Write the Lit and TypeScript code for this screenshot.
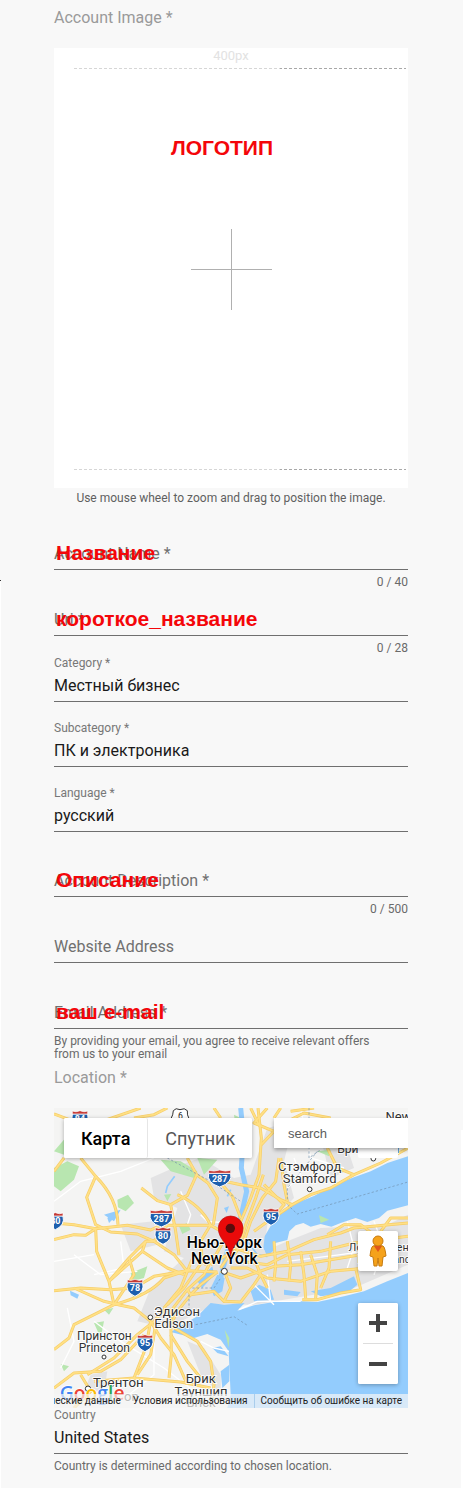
import { LitElement, html, svg, css, nothing } from "lit";
import { customElement, property } from "lit/decorators.js";

const fieldStyles = css`
  :host {
    display: block;
    font-family: Roboto, sans-serif;
    color: #1a1a1a;
  }
  * {
    box-sizing: border-box;
  }
  .field {
    display: grid;
    grid-template-rows: 14px 28px auto auto;
  }
  .small {
    font-size: 12px;
    line-height: 14px;
    color: #777;
  }
  .control {
    display: grid;
    align-items: center;
    padding-top: 4px;
  }
  .control > * {
    grid-area: 1 / 1;
  }
  .box {
    width: 100%;
    height: 24px;
    margin: 0;
    padding: 0;
    border: 0;
    border-radius: 0;
    outline: 0;
    background: transparent;
    appearance: none;
    font: 16px/24px Roboto, sans-serif;
    color: #1a1a1a;
    opacity: 1;
  }
  .rest {
    font-size: 16px;
    line-height: 24px;
    color: #707070;
    pointer-events: none;
  }
  .note {
    padding: 0 0 2px 2px;
    font: bold 21px/22px "Liberation Sans", Arial, sans-serif;
    color: #f4060a;
    pointer-events: none;
  }
  .line {
    margin-top: 3px;
    border-top: 1px solid #6f6f6f;
  }
  .under {
    display: flex;
    min-height: 20px;
    padding-top: 6px;
    font-size: 12px;
    line-height: 13px;
    color: #6a6a6a;
  }
  .hint {
    flex: 1;
    margin: 0;
    padding-right: 32px;
  }
  .count {
    margin-left: auto;
  }
`;

@customElement("text-field")
export class TextField extends LitElement {
  static styles = fieldStyles;
  @property() label = "";
  @property() note = "";
  @property() hint = "";
  @property() value = "";
  @property({ type: Number }) max = 0;

  render() {
    return html`<div class="field">
      <span class="small">${this.value ? html`<label for="box">${this.label}</label>` : nothing}</span>
      <div class="control">
        ${this.value ? nothing : html`<label class="rest" for="box">${this.label}</label>`}
        <input class="box" id="box" type="text" .value=${this.value} />
        ${this.note ? html`<span class="note">${this.note}</span>` : nothing}
      </div>
      <div class="line"></div>
      <div class="under">
        ${this.hint ? html`<p class="hint">${this.hint}</p>` : nothing}
        ${this.max ? html`<span class="count">0 / ${this.max}</span>` : nothing}
      </div>
    </div>`;
  }
}

@customElement("select-field")
export class SelectField extends LitElement {
  static styles = [
    fieldStyles,
    css`
      .under {
        min-height: 19px;
      }
    `,
  ];
  @property() label = "";
  @property() value = "";

  render() {
    return html`<div class="field">
      <label class="small" for="box">${this.label}</label>
      <div class="control">
        <select class="box" id="box">
          <option selected>${this.value}</option>
        </select>
      </div>
      <div class="line"></div>
      <div class="under"></div>
    </div>`;
  }
}

const roads = [
  "M0 18L60 40L130 45L260 0",
  "M0 190L30 150M80 150L125 205L98 268L125 350L170 372L250 378L300 400L340 352L470 352L520 380",
  "M125 205Q190 270 192 350",
  "M0 345L60 350L125 362L220 352L290 366L320 352",
  "M0 395L60 380L95 382L125 362L128 430L165 520L180 590L60 650L45 690L0 725",
  "M0 548L80 540L170 545L240 540L300 505L400 488L490 492",
  "M60 540L150 580L200 592L240 600L290 640L320 690L360 740L400 830",
  "M180 590Q290 560 330 510L410 484",
  "M165 520L225 450L275 400L300 400M275 400L265 430L165 520",
  "M265 430L340 480L390 500",
  "M300 400L360 440L400 490",
  "M262 240L310 278L350 290L400 262L428 200L400 150M350 290L365 370L375 440",
  "M428 200L462 225L490 270L478 350M370 260Q440 290 470 352",
  "M490 215L560 230L620 240L680 275L715 290",
  "M500 225L535 265L560 330",
  "M612 0L622 90L615 200L590 270L560 340L540 420L500 480",
  "M628 200L605 270L575 350L555 420",
  "M640 0L600 45L660 70L622 110",
  "M675 150L665 220L625 270L590 340L570 400L540 440",
  "M590 0L614 50M660 30L680 0",
  "M710 10L780 0M700 40L750 15L830 30",
  "M680 150L690 230L700 280",
  "M630 230L690 290L655 330L600 370",
  "M1062 120L980 165L900 200L830 240L770 260L715 290L650 335",
  "M820 120L850 180L900 200",
  "M540 420L620 445L700 430L780 395L860 375L900 360L1062 345",
  "M560 460L640 470L700 440L800 430L900 405L1062 385",
  "M500 490L560 510L660 475L740 470L830 455L920 440",
  "M530 480L580 480L640 510L740 520L830 490L940 480",
  "M600 450L620 500L640 540M660 400L665 470L660 520",
  "M740 430L750 500L755 570M770 440L790 500L785 572",
  "M830 400L825 480L800 540M700 400L710 470L705 520",
  "M905 480L920 545L860 555L790 575L745 575",
  "M820 380L870 350L920 350L960 380M980 370L1010 330L1062 330",
  "M515 500L530 540L510 580L480 550L410 560L400 545",
  "M510 580L560 582L600 530L620 500",
  "M490 492L440 530L410 560L370 610L350 650",
  "M480 440L450 500L400 545L350 610M420 440L380 540L330 600",
  "M470 350L440 400L445 460L390 540L340 590",
  "M520 380L480 450L450 470M560 400L520 440L470 470",
  "M350 600L352 740L345 810M335 600L300 640L250 680L180 750L100 800",
  "M290 640L275 720L240 810M305 650L290 740L250 800",
  "M0 840L60 795L140 790L200 755L270 680",
  "M80 800L110 850L60 900M120 820L240 810L380 822L470 840",
  "M360 660L430 700L470 760L480 830L470 900M350 680L400 760L440 810",
  "M340 0L300 20L240 30M480 0L500 30",
  "M225 450L240 500L180 590",
];

const streets = [
  "M0 280L80 220L200 190L300 150M200 400L210 480L120 500",
  "M40 600L60 700L20 780M120 640L200 700L330 780L420 850",
  "M60 440L140 500L250 490M720 150L740 200L700 240",
  "M440 320L460 340L520 345L560 370M600 530L660 590M640 500L650 580",
  "M555 605L610 580L740 580M440 700L480 720L525 730",
  "M700 460L860 440L1000 420M880 340L900 420L880 480M960 340L990 420L960 500",
  "M300 700L300 800L200 880M740 0L770 150L870 180",
  "M0 460L120 440M380 250L410 320L400 350",
];

const interstates = [
  { x: 78, y: 32, n: "84" },
  { x: 497, y: 210, n: "287" },
  { x: 322, y: 330, n: "287" },
  { x: 327, y: 382, n: "80" },
  { x: 4, y: 338, n: "80" },
  { x: 651, y: 325, n: "95" },
  { x: 243, y: 538, n: "78" },
  { x: 273, y: 704, n: "95" },
];

const places = [
  { x: 767, y: 188, t: "Стэмфорд", s: 39 },
  { x: 767, y: 226, t: "Stamford", s: 39 },
  { x: 369, y: 623, t: "Эдисон", s: 39 },
  { x: 359, y: 661, t: "Edison", s: 39 },
  { x: 151, y: 696, t: "Принстон", s: 36 },
  { x: 151, y: 732, t: "Princeton", s: 36 },
  { x: 193, y: 836, t: "Трентон", s: 40 },
  { x: 232, y: 878, t: "on", s: 39 },
  { x: 440, y: 826, t: "Брик", s: 39 },
  { x: 441, y: 864, t: "Тауншип", s: 39 },
  { x: 441, y: 898, t: "Brick", s: 39 },
  { x: 1052, y: 38, t: "New H", s: 39 },
  { x: 945, y: 134, t: "Бриджпорт", s: 36 },
  { x: 984, y: 430, t: "Лонг-Айленд", s: 33 },
  { x: 990, y: 464, t: "Long Island", s: 31 },
];

const shield = (x: number, y: number, n: string) => {
  const w = n.length > 2 ? 35 : 25;
  return svg`<g transform="translate(${x} ${y})">
    <path class="shield" d="M${-w + 2} -14H${w - 2}Q${w + 5} 14 0 27Q${-w - 5} 14 ${-w + 2} -14Z" />
    <path class="crown" d="M${-w + 2} -14V-23Q${-w / 2} -18 0 -24Q${w / 2} -18 ${w - 2} -23V-14Z" />
    <text class="num" y="11">${n}</text>
  </g>`;
};

@customElement("location-map")
export class LocationMap extends LitElement {
  static styles = css`
    :host {
      display: block;
      font-family: Roboto, sans-serif;
    }
    * {
      box-sizing: border-box;
    }
    .map {
      position: relative;
      height: 300px;
      overflow: hidden;
      background: #93ccfd;
    }
    .canvas {
      display: block;
      width: 100%;
      height: 100%;
    }
    .land { fill: #f4f4f3; }
    .urban { fill: #e3e3e4; }
    .water { fill: #93ccfd; }
    .river { fill: none; stroke: #93ccfd; }
    .green { fill: #b8e6b0; }
    .street { fill: none; stroke: #fff; stroke-width: 4; }
    .casing { fill: none; stroke: #f6cd68; stroke-width: 9; stroke-linejoin: round; }
    .road { fill: none; stroke: #ffe085; stroke-width: 5; stroke-linejoin: round; }
    .border { fill: none; stroke: #7191ad; stroke-width: 2; stroke-dasharray: 7 6; }
    .shield { fill: #1d5fae; stroke: #fff; stroke-width: 3; }
    .crown { fill: #c53a35; stroke: #fff; stroke-width: 2; }
    .num { fill: #fff; font-size: 27px; font-weight: 700; text-anchor: middle; }
    .us { fill: #fff; stroke: #333; stroke-width: 3; }
    .us-num { fill: #222; font-size: 26px; text-anchor: middle; }
    .place { fill: #333; stroke: #fff; stroke-width: 5; paint-order: stroke; text-anchor: middle; }
    .city { fill: #000; stroke: #fff; stroke-width: 5; paint-order: stroke; text-anchor: middle; font-size: 47px; font-weight: 500; }
    .dot { fill: #fff; stroke: #333; stroke-width: 3; }
    .pin { fill: #ea0a0a; stroke: #b80d0d; stroke-width: 2; }
    .hole { fill: #5a0b0b; }
    .logo { font: 600 58px "Open Sans", sans-serif; stroke: #fff; stroke-width: 4; paint-order: stroke; }
    .blue { fill: #4285f4; }
    .red { fill: #ea4335; }
    .yellow { fill: #fbbc05; }
    .lime { fill: #34a853; }
    button {
      margin: 0;
      padding: 0;
      border: 0;
      background: #fff;
      font-family: inherit;
    }
    .types {
      position: absolute;
      top: 10px;
      left: 10px;
      display: flex;
      height: 40px;
      background: #fff;
      border-radius: 2px;
      box-shadow: 0 1px 4px rgba(0, 0, 0, 0.3);
    }
    .type {
      padding: 0 17px;
      border-radius: 2px;
      font-size: 18px;
      color: #565656;
    }
    .type.on {
      border-right: 1px solid #e6e6e6;
      font-weight: 500;
      color: #000;
    }
    .full {
      position: absolute;
      top: 10px;
      right: 10px;
      width: 40px;
      height: 40px;
      border-radius: 2px;
    }
    .search {
      position: absolute;
      top: 10px;
      left: 220px;
      right: 0;
      height: 30px;
      background: #fff;
      box-shadow: 0 2px 4px rgba(0, 0, 0, 0.35);
    }
    .query {
      width: 100%;
      height: 30px;
      padding: 0 14px;
      border: 0;
      outline: 0;
      background: transparent;
      font: 13px "Liberation Sans", Arial, sans-serif;
    }
    .query::placeholder {
      color: #5c5c5c;
      opacity: 1;
    }
    .side {
      position: absolute;
      right: 10px;
      bottom: 24px;
      display: flex;
      flex-direction: column;
      gap: 32px;
      width: 40px;
    }
    .man,
    .zoom {
      border-radius: 2px;
      background: #fff;
      box-shadow: 0 1px 4px rgba(0, 0, 0, 0.3);
    }
    .man {
      display: grid;
      place-items: center;
      height: 40px;
    }
    .zoom {
      display: flex;
      flex-direction: column;
      align-items: center;
    }
    .step {
      display: grid;
      place-items: center;
      width: 40px;
      height: 40px;
      border-radius: 2px;
    }
    .rule {
      width: 30px;
      height: 1px;
      background: #ddd;
    }
    .legal {
      position: absolute;
      right: 0;
      bottom: 0;
      display: flex;
      height: 14px;
      white-space: nowrap;
      font-size: 10px;
      line-height: 14px;
      background: rgba(245, 245, 245, 0.7);
    }
    .legal a {
      padding: 0 6px;
      color: #222;
      text-decoration: none;
    }
    .legal .last {
      border-left: 1px solid #a9cdec;
    }
  `;

  render() {
    return html`<div class="map">
      <svg class="canvas" viewBox="0 0 1062 900" preserveAspectRatio="xMidYMid slice" role="img" aria-label="New York">
        <rect class="land" width="1062" height="900" />
        <path class="urban" d="M380 170L440 150L540 210L590 200L640 60L720 40L690 160L720 270L640 350L630 430L700 400L800 360L1000 350L1062 320V470L900 540L600 590L480 590L340 660L250 640L290 540L390 450L330 430L370 300L300 270L290 210Z" />
        <path class="urban" d="M200 350L300 340L310 410L230 430ZM110 800L160 790L150 850L90 850ZM400 700L450 720L500 800L500 860L440 800ZM790 50L860 60L900 180L830 210Z" />
        <path class="green" d="M0 180L40 160L75 175L60 215L20 250L0 235ZM320 155L380 160L430 190L420 210L350 190ZM190 275L222 260L240 285L215 310L192 298ZM120 645L150 640L140 690ZM20 768L45 775L30 790ZM330 260L352 258L340 280ZM395 60L450 50L460 100L400 110ZM0 130L60 60L90 80L30 140ZM430 150L490 155L450 200ZM230 495L280 475L270 510L235 520ZM375 355L400 345L410 365L385 378ZM230 545L265 555L240 575ZM150 605L178 600L165 620ZM790 130L830 125L825 145ZM540 20L560 30L545 60Z" />
        <path class="water" d="M1062 145L1000 165L950 190L900 208L840 232L780 264L720 288L672 322L652 350L632 385L628 420L640 445L658 428L664 405L700 396L706 370L725 352L748 345L770 356L800 348L832 356L860 345L905 330L940 342L975 330L1000 308L1062 292Z" />
        <path class="water" d="M1062 495L1000 520L930 550L870 565L790 582L740 580L660 582L600 592L550 608L572 585L510 590L470 585L430 625L350 672L420 690L460 678L500 695L524 730L530 860L520 900H1062Z" />
        <path class="water" d="M590 550L615 530L650 545L660 575L600 580ZM770 550L830 540L900 505L910 530L880 555L800 565ZM490 500L512 510L505 550L480 565L470 540ZM430 520L475 475L480 500L445 540ZM160 330L185 310L180 330L165 345ZM150 320L200 305L180 340ZM48 548L75 560L70 572L50 562ZM690 545L740 552L730 565L690 560ZM510 300L525 295L518 315ZM475 720L500 715L524 745L490 735ZM500 790L526 770V820L505 840Z" />
        <path class="river" stroke-width="15" d="M560 0L568 80L562 180L578 250L560 330L520 430L500 510" />
        <path class="river" stroke-width="5" d="M362 205L340 235L335 255M530 245L520 265M700 60L675 80M640 445L610 440L580 400M400 610L440 625L470 610" />
        <path class="green" d="M795 322L825 335L800 345ZM512 665L526 690L524 720Z" />
        ${streets.map((d) => svg`<path class="street" d=${d} />`)}
        ${roads.map((d) => svg`<path class="casing" d=${d} />`)}
        ${roads.map((d) => svg`<path class="road" d=${d} />`)}
        <path class="border" d="M340 150L470 220L560 280M415 540H480L500 510M405 560V610M425 650L540 626L580 652M700 290L730 318L1062 222M765 0V150L800 125M790 130L700 240V280" />
        <path class="us" d="M358 8Q365 -2 378 5Q392 -2 400 8Q398 20 406 34H350Q358 20 358 8Z" />
        <text class="us-num" x="379" y="32">6</text>
        ${interstates.map((s) => shield(s.x, s.y, s.n))}
        ${places.map((p) => svg`<text class="place" x=${p.x} y=${p.y} font-size=${p.s}>${p.t}</text>`)}
        <circle class="dot" cx="767" cy="244" r="7" />
        <circle class="dot" cx="289" cy="628" r="7" />
        <circle class="dot" cx="150" cy="747" r="6" />
        <circle class="dot" cx="102" cy="842" r="8" />
        <circle class="dot" cx="958" cy="152" r="7" />
        <text class="city" x="511" y="421">Нью-Йорк</text>
        <text class="city" x="511" y="469">New York</text>
        <circle class="dot" cx="511" cy="490" r="9" />
        <path class="pin" d="M530 445C525 405 493 397 493 360A37 36 0 0 1 567 360C567 397 535 405 530 445Z" />
        <circle class="hole" cx="529" cy="361" r="14" />
        <text class="logo" x="17" y="876"><tspan class="blue">G</tspan><tspan class="red">o</tspan><tspan class="yellow">o</tspan><tspan class="blue">g</tspan><tspan class="lime">l</tspan><tspan class="red">e</tspan></text>
      </svg>
      <div class="types">
        <button class="type on">Карта</button>
        <button class="type">Спутник</button>
      </div>
      <button class="full" aria-label="Fullscreen"></button>
      <div class="search">
        <input class="query" type="text" placeholder="search" aria-label="search" />
      </div>
      <div class="side">
        <button class="man" aria-label="Street View">
          <svg width="18" height="32" viewBox="0 0 18 32">
            <path fill="#f5a21b" stroke="#c77b10" d="M4 11Q9 9 14 11Q16 12 17 21L14 22L13 31H10L9 23L8 31H5L4 22L1 21Q2 12 4 11Z" />
            <circle cx="9" cy="6" r="5" fill="#f5a21b" stroke="#c77b10" />
            <path fill="#e0561b" d="M5 11H13L9 17Z" />
          </svg>
        </button>
        <div class="zoom">
          <button class="step" aria-label="Zoom in">
            <svg width="18" height="18" viewBox="0 0 18 18"><path fill="#444" d="M7 0H11V7H18V11H11V18H7V11H0V7H7Z" /></svg>
          </button>
          <div class="rule"></div>
          <button class="step" aria-label="Zoom out">
            <svg width="18" height="18" viewBox="0 0 18 18"><path fill="#444" d="M0 7H18V11H0Z" /></svg>
          </button>
        </div>
      </div>
      <div class="legal">
        <a href="#data">Картографические данные</a>
        <a href="#terms">Условия использования</a>
        <a class="last" href="#report">Сообщить об ошибке на карте</a>
      </div>
    </div>`;
  }
}

@customElement("app-root")
export class AppRoot extends LitElement {
  static styles = css`
    :host {
      display: block;
      font-family: Roboto, sans-serif;
    }
    * {
      box-sizing: border-box;
    }
    .page {
      position: relative;
      padding: 8px 55px 14px 54px;
      background: #f8f8f8;
    }
    .edge-left,
    .edge-right {
      position: absolute;
      bottom: 0;
      background: #fff;
    }
    .edge-left {
      left: 0;
      top: 580px;
      width: 1px;
      border-top: 1px solid #333;
    }
    .edge-right {
      right: 0;
      top: 1130px;
      width: 2px;
    }
    .title {
      margin: 0;
      font-size: 16px;
      font-weight: 400;
      line-height: 20px;
      color: #9a9a9a;
    }
    .upload {
      position: relative;
      display: flex;
      flex-direction: column;
      width: 100%;
      height: 440px;
      margin: 20px 0 0;
      padding: 0 0 18px;
      border: 0;
      background: #fff;
      font-family: inherit;
    }
    .size {
      font-size: 13px;
      line-height: 16px;
      height: 20px;
      color: #e2e2e2;
    }
    .dash {
      height: 1px;
      margin: 0 2px 0 20px;
      background:
        repeating-linear-gradient(90deg, transparent 0 3px, #fff 3px 5px),
        linear-gradient(90deg, #d6d6d6 62%, #a8a8a8 62%);
    }
    .area {
      flex: 1;
      display: grid;
      place-items: center;
    }
    .logo-note {
      position: absolute;
      top: 88px;
      left: 0;
      right: 0;
      padding-right: 18px;
      text-align: center;
      font: bold 21px/24px "Liberation Sans", Arial, sans-serif;
      color: #f4060a;
    }
    .tip {
      margin: 0 0 16px;
      text-align: center;
      font-size: 12px;
      line-height: 20px;
      color: #5f5f5f;
    }
    .location {
      margin: 7px 0 20px;
    }
  `;

  render() {
    return html`<main class="page">
      <div class="edge-left"></div>
      <div class="edge-right"></div>
      <h2 class="title">Account Image *</h2>
      <button class="upload" aria-label="Account Image">
        <span class="size">400px</span>
        <span class="dash"></span>
        <span class="area">
          <svg width="81" height="81" viewBox="0 0 81 81"><path fill="#b0b0b0" d="M40 0H41V40H81V41H41V81H40V41H0V40H40Z" /></svg>
        </span>
        <span class="dash"></span>
        <span class="logo-note">ЛОГОТИП</span>
      </button>
      <p class="tip">Use mouse wheel to zoom and drag to position the image.</p>
      <text-field label="Account Name *" note="Название" max="40"></text-field>
      <text-field label="Uri *" note="короткое_название" max="28"></text-field>
      <select-field label="Category *" value="Местный бизнес"></select-field>
      <select-field label="Subcategory *" value="ПК и электроника"></select-field>
      <select-field label="Language *" value="русский"></select-field>
      <text-field label="Account Description *" note="Описание" max="500"></text-field>
      <text-field label="Website Address"></text-field>
      <text-field
        label="Email Address *"
        note="ваш e-mail"
        hint="By providing your email, you agree to receive relevant offers from us to your email"
      ></text-field>
      <h2 class="title location">Location *</h2>
      <location-map></location-map>
      <text-field
        label="Country"
        value="United States"
        hint="Country is determined according to chosen location."
      ></text-field>
    </main>`;
  }
}
